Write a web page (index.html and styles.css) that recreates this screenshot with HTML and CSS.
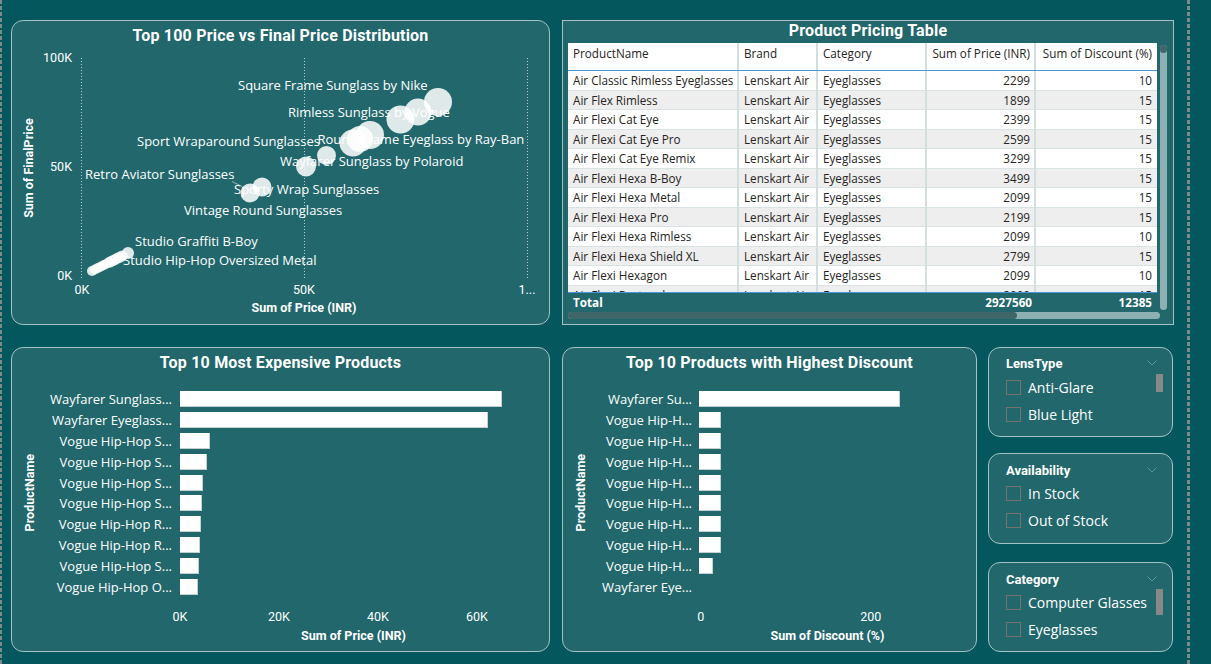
FILE: index.html
```html
<!DOCTYPE html>
<html lang="en">
<head>
<meta charset="utf-8">
<title>Eyewear Pricing Dashboard</title>
<link rel="stylesheet" href="styles.css">
</head>
<body>
<div class="page">
  <div class="edge edge-left"></div>
  <main class="canvas">
    <div class="row">
      <section class="card scatter-card">
        <h2 class="card-title">Top 100 Price vs Final Price Distribution</h2>
        <svg class="scatter-svg" width="537" height="274" viewBox="12 50 537 274">
          <g class="gridlines">
            <line x1="81.5" y1="58" x2="81.5" y2="278"/>
            <line x1="304.5" y1="58" x2="304.5" y2="278"/>
            <line x1="527.5" y1="58" x2="527.5" y2="278"/>
          </g>
          <text class="tick" x="72" y="62.4" text-anchor="end">100K</text>
          <text class="tick" x="72" y="171.4" text-anchor="end">50K</text>
          <text class="tick" x="72" y="280" text-anchor="end">0K</text>
          <text class="tick" x="82" y="294" text-anchor="middle">0K</text>
          <text class="tick" x="304" y="294" text-anchor="middle">50K</text>
          <text class="tick" x="527" y="294" text-anchor="middle">1...</text>
          <text class="axis-title" transform="translate(33.4,168) rotate(-90)" text-anchor="middle">Sum of FinalPrice</text>
          <text class="axis-title" x="304" y="312.4" text-anchor="middle">Sum of Price (INR)</text>
          <line class="leader" x1="232" y1="181.5" x2="242" y2="186.5"/>
          <g class="bubbles">
            <circle cx="438" cy="102" r="14"/>
            <circle cx="418" cy="112" r="13.5"/>
            <circle cx="400.5" cy="119.5" r="14"/>
            <circle cx="370" cy="135" r="14"/>
            <circle cx="360" cy="139" r="13"/>
            <circle cx="353" cy="143" r="13.5"/>
            <circle cx="326.5" cy="155.5" r="9.5"/>
            <circle cx="306" cy="166.5" r="10"/>
            <circle cx="262" cy="187" r="9.5"/>
            <circle cx="250" cy="193" r="9.5"/>
            <circle cx="92" cy="271" r="5"/>
            <circle cx="95" cy="269.5" r="5"/>
            <circle cx="98" cy="268" r="5"/>
            <circle cx="101" cy="266.5" r="5"/>
            <circle cx="104" cy="265" r="5"/>
            <circle cx="107" cy="263.5" r="5"/>
            <circle cx="110" cy="262" r="5.5"/>
            <circle cx="113" cy="260.5" r="5.5"/>
            <circle cx="116" cy="259" r="5.5"/>
            <circle cx="119" cy="257.5" r="5.5"/>
            <circle cx="122" cy="256" r="5.5"/>
            <circle cx="128" cy="253" r="6"/>
          </g>
          <g class="pt-label">
            <text x="238" y="89.6">Square Frame Sunglass by Nike</text>
            <text x="288" y="117.3">Rimless Sunglass by Vogue</text>
            <text x="137" y="146.3">Sport Wraparound Sunglasses</text>
            <text x="317.5" y="143.9">Round Frame Eyeglass by Ray-Ban</text>
            <text x="280" y="166.3">Wayfarer Sunglass by Polaroid</text>
            <text x="85" y="178.9">Retro Aviator Sunglasses</text>
            <text x="234" y="193.6">Sporty Wrap Sunglasses</text>
            <text x="184" y="214.6">Vintage Round Sunglasses</text>
            <text x="135" y="245.6">Studio Graffiti B-Boy</text>
            <text x="123" y="264.6">Studio Hip-Hop Oversized Metal</text>
          </g>
        </svg>
      </section>

      <section class="table-card">
        <h2 class="table-title">Product Pricing Table</h2>
        <div class="table-wrap">
          <div class="table-main">
            <div class="tbl">
              <div class="tbl-head">
                <div class="th">ProductName</div>
                <div class="th">Brand</div>
                <div class="th">Category</div>
                <div class="th num">Sum of Price (INR)</div>
                <div class="th num">Sum of Discount (%)</div>
              </div>
              <div class="tbl-body">
                <div class="tr"><div class="td">Air Classic Rimless Eyeglasses</div><div class="td">Lenskart Air</div><div class="td">Eyeglasses</div><div class="td num">2299</div><div class="td num">10</div></div>
                <div class="tr"><div class="td">Air Flex Rimless</div><div class="td">Lenskart Air</div><div class="td">Eyeglasses</div><div class="td num">1899</div><div class="td num">15</div></div>
                <div class="tr"><div class="td">Air Flexi Cat Eye</div><div class="td">Lenskart Air</div><div class="td">Eyeglasses</div><div class="td num">2399</div><div class="td num">15</div></div>
                <div class="tr"><div class="td">Air Flexi Cat Eye Pro</div><div class="td">Lenskart Air</div><div class="td">Eyeglasses</div><div class="td num">2599</div><div class="td num">15</div></div>
                <div class="tr"><div class="td">Air Flexi Cat Eye Remix</div><div class="td">Lenskart Air</div><div class="td">Eyeglasses</div><div class="td num">3299</div><div class="td num">15</div></div>
                <div class="tr"><div class="td">Air Flexi Hexa B-Boy</div><div class="td">Lenskart Air</div><div class="td">Eyeglasses</div><div class="td num">3499</div><div class="td num">15</div></div>
                <div class="tr"><div class="td">Air Flexi Hexa Metal</div><div class="td">Lenskart Air</div><div class="td">Eyeglasses</div><div class="td num">2099</div><div class="td num">15</div></div>
                <div class="tr"><div class="td">Air Flexi Hexa Pro</div><div class="td">Lenskart Air</div><div class="td">Eyeglasses</div><div class="td num">2199</div><div class="td num">15</div></div>
                <div class="tr"><div class="td">Air Flexi Hexa Rimless</div><div class="td">Lenskart Air</div><div class="td">Eyeglasses</div><div class="td num">2099</div><div class="td num">10</div></div>
                <div class="tr"><div class="td">Air Flexi Hexa Shield XL</div><div class="td">Lenskart Air</div><div class="td">Eyeglasses</div><div class="td num">2799</div><div class="td num">15</div></div>
                <div class="tr"><div class="td">Air Flexi Hexagon</div><div class="td">Lenskart Air</div><div class="td">Eyeglasses</div><div class="td num">2099</div><div class="td num">10</div></div>
                <div class="tr"><div class="td">Air Flexi Rectangle</div><div class="td">Lenskart Air</div><div class="td">Eyeglasses</div><div class="td num">2099</div><div class="td num">15</div></div>
              </div>
            </div>
            <div class="total">
              <span class="tot-label">Total</span><span></span><span></span><span class="num">2927560</span><span class="num last">12385</span>
            </div>
            <div class="hscroll"><div class="hthumb"></div></div>
          </div>
          <div class="vscroll"><div class="vthumb"></div></div>
        </div>
      </section>
    </div>

    <div class="row">
      <section class="card bar-card price-card">
        <h2 class="card-title">Top 10 Most Expensive Products</h2>
        <div class="bar-plot">
          <div class="y-title"><span>ProductName</span></div>
          <ul class="bar-rows">
            <li class="bar-row"><span class="bar-label">Wayfarer Sunglass...</span><span class="bar" style="width:322px"></span></li>
            <li class="bar-row"><span class="bar-label">Wayfarer Eyeglass...</span><span class="bar" style="width:308px"></span></li>
            <li class="bar-row"><span class="bar-label">Vogue Hip-Hop S...</span><span class="bar" style="width:30px"></span></li>
            <li class="bar-row"><span class="bar-label">Vogue Hip-Hop S...</span><span class="bar" style="width:27px"></span></li>
            <li class="bar-row"><span class="bar-label">Vogue Hip-Hop S...</span><span class="bar" style="width:23px"></span></li>
            <li class="bar-row"><span class="bar-label">Vogue Hip-Hop S...</span><span class="bar" style="width:22px"></span></li>
            <li class="bar-row"><span class="bar-label">Vogue Hip-Hop R...</span><span class="bar" style="width:21px"></span></li>
            <li class="bar-row"><span class="bar-label">Vogue Hip-Hop R...</span><span class="bar" style="width:20px"></span></li>
            <li class="bar-row"><span class="bar-label">Vogue Hip-Hop S...</span><span class="bar" style="width:19px"></span></li>
            <li class="bar-row"><span class="bar-label">Vogue Hip-Hop O...</span><span class="bar" style="width:18px"></span></li>
          </ul>
        </div>
        <div class="x-ticks"><span>0K</span><span>20K</span><span>40K</span><span>60K</span></div>
        <div class="x-title">Sum of Price (INR)</div>
      </section>

      <section class="card bar-card disc-card">
        <h2 class="card-title">Top 10 Products with Highest Discount</h2>
        <div class="bar-plot">
          <div class="y-title"><span>ProductName</span></div>
          <ul class="bar-rows">
            <li class="bar-row"><span class="bar-label">Wayfarer Su...</span><span class="bar" style="width:201px"></span></li>
            <li class="bar-row"><span class="bar-label">Vogue Hip-H...</span><span class="bar" style="width:22px"></span></li>
            <li class="bar-row"><span class="bar-label">Vogue Hip-H...</span><span class="bar" style="width:22px"></span></li>
            <li class="bar-row"><span class="bar-label">Vogue Hip-H...</span><span class="bar" style="width:22px"></span></li>
            <li class="bar-row"><span class="bar-label">Vogue Hip-H...</span><span class="bar" style="width:22px"></span></li>
            <li class="bar-row"><span class="bar-label">Vogue Hip-H...</span><span class="bar" style="width:22px"></span></li>
            <li class="bar-row"><span class="bar-label">Vogue Hip-H...</span><span class="bar" style="width:22px"></span></li>
            <li class="bar-row"><span class="bar-label">Vogue Hip-H...</span><span class="bar" style="width:22px"></span></li>
            <li class="bar-row"><span class="bar-label">Vogue Hip-H...</span><span class="bar" style="width:13.5px"></span></li>
            <li class="bar-row"><span class="bar-label">Wayfarer Eye...</span></li>
          </ul>
        </div>
        <div class="x-ticks"><span>0</span><span>200</span></div>
        <div class="x-title">Sum of Discount (%)</div>
      </section>

      <div class="slicers">
        <section class="slicer">
          <header class="slicer-head"><h3>LensType</h3><svg class="chev" width="10" height="6" viewBox="0 0 10 6"><path d="M0.5 0.5 L5 5 L9.5 0.5"/></svg></header>
          <div class="slicer-body">
            <ul class="slicer-list">
              <li><span class="cb"></span>Anti-Glare</li>
              <li><span class="cb"></span>Blue Light</li>
            </ul>
            <div class="slicer-scroll"><div class="sthumb"></div></div>
          </div>
        </section>
        <section class="slicer slicer-mid">
          <header class="slicer-head"><h3>Availability</h3><svg class="chev" width="10" height="6" viewBox="0 0 10 6"><path d="M0.5 0.5 L5 5 L9.5 0.5"/></svg></header>
          <div class="slicer-body">
            <ul class="slicer-list">
              <li><span class="cb"></span>In Stock</li>
              <li><span class="cb"></span>Out of Stock</li>
            </ul>
          </div>
        </section>
        <section class="slicer slicer-last">
          <header class="slicer-head"><h3>Category</h3><svg class="chev" width="10" height="6" viewBox="0 0 10 6"><path d="M0.5 0.5 L5 5 L9.5 0.5"/></svg></header>
          <div class="slicer-body">
            <ul class="slicer-list">
              <li><span class="cb"></span>Computer Glasses</li>
              <li><span class="cb"></span>Eyeglasses</li>
            </ul>
            <div class="slicer-scroll"><div class="sthumb tall"></div></div>
          </div>
        </section>
      </div>
    </div>
  </main>
  <div class="edge edge-right"></div>
</div>
</body>
</html>
```

FILE: styles.css
```css
* { box-sizing: border-box; margin: 0; padding: 0; }
html, body { width: 1211px; height: 664px; }
body {
  background: #04585d;
  font-family: "Open Sans", "Noto Sans", sans-serif;
  color: #fff;
  overflow: hidden;
}
.page { display: flex; width: 1211px; height: 664px; }
.edge {
  background: repeating-linear-gradient(to bottom, #7c8a8a 0 4px, transparent 4px 6px);
  height: 664px;
}
.edge-left { width: 2px; }
.edge-right { width: 3px; }
.canvas {
  width: 1185px;
  padding: 20px 0 0 9px;
  display: flex;
  flex-direction: column;
  gap: 22px;
}
.row { display: flex; gap: 12px; height: 305px; }

.card {
  background: #21676c;
  border: 1px solid #a3c2c4;
  border-radius: 12px;
}
.card-title {
  height: 29px;
  font: 700 16px/29px Roboto, "Liberation Sans", sans-serif;
  letter-spacing: 0.2px;
  text-align: center;
  color: #fff;
}

/* scatter */
.scatter-card { width: 539px; display: flex; flex-direction: column; }
.scatter-svg { display: block; }
.gridlines line { stroke: #b3cbcc; stroke-width: 1; stroke-dasharray: 1 2; }
.tick { font: 400 12.5px Roboto, sans-serif; fill: #fff; }
.axis-title { font: 700 12.5px Roboto, sans-serif; fill: #fff; }
.bubbles circle { fill: #fff; fill-opacity: 0.86; }
.pt-label text { font: 400 13px "Open Sans", sans-serif; fill: #fff; }
.leader { stroke: #9db5b6; stroke-width: 1; }

/* table */
.table-card {
  width: 612px;
  background: #21676c;
  border: 1px solid #a3c2c4;
}
.table-title {
  height: 22px;
  font: 700 16px/19px Roboto, sans-serif;
  letter-spacing: 0.2px;
  text-align: center;
  color: #fff;
}
.table-wrap { display: flex; padding-left: 5px; }
.table-main { width: 592px; }
.tbl {
  width: 589px;
  height: 250px;
  overflow: hidden;
  background: #fff;
  border-bottom: 1px solid #4c96d7;
}
.tbl-head, .tr, .total {
  display: grid;
  grid-template-columns: 171px 79px 109px 109px 121px;
}
.tbl-head { height: 28px; border-bottom: 1px solid #4c96d7; }
.th {
  padding: 3px 5px 0;
  font-size: 11.7px;
  line-height: 15px;
  color: #252423;
  border-right: 2px solid #d3dfdf;
  white-space: nowrap;
}
.th.num { text-align: right; padding-right: 4px; }
.tr { height: 19.5px; }
.tr:nth-child(even) { background: #eeeeee; }
.td {
  padding: 0 5px;
  font-size: 11.7px;
  line-height: 19.5px;
  color: #252423;
  border-right: 2px solid #d3dfdf;
  box-shadow: inset 0 -1px 0 #d9e3e3;
  white-space: nowrap;
  overflow: hidden;
}
.td.num { text-align: right; padding-right: 4px; }
.th:last-child, .td:last-child { border-right: 0; padding-right: 5px; }
.total {
  height: 18px;
  font-size: 11.7px;
  font-weight: 700;
  line-height: 18px;
  color: #fff;
}
.total .tot-label { padding-left: 5px; }
.total .num { text-align: right; padding-right: 4px; }
.total .num.last { padding-right: 5px; }
.hscroll {
  margin-top: 1px;
  width: 592px;
  height: 7px;
  background: #8db1b3;
  border-radius: 4px;
}
.hthumb { width: 449px; height: 7px; background: #3f6669; border-radius: 4px; }
.vscroll {
  margin-top: 2px;
  width: 7px;
  height: 265px;
  background: #8db1b3;
  border-radius: 4px;
}
.vthumb { height: 8px; background: #3f6669; border-radius: 4px; }

/* bar charts */
.bar-card { display: flex; flex-direction: column; }
.price-card { width: 539px; }
.disc-card { width: 415px; }
.bar-plot { display: flex; margin-top: 11.5px; height: 209px; }
.y-title {
  width: 34px;
  display: flex;
  align-items: center;
  justify-content: center;
  font: 700 12.5px Roboto, sans-serif;
}
.y-title span { writing-mode: vertical-rl; transform: rotate(180deg); }
.bar-rows { list-style: none; display: flex; flex-direction: column; }
.bar-row { display: flex; align-items: center; height: 20.9px; gap: 8px; }
.disc-card .bar-row { gap: 7px; }
.bar-label {
  width: 126px;
  text-align: right;
  font-size: 13px;
  line-height: 16px;
  white-space: nowrap;
}
.disc-card .bar-label { width: 95px; }
.bar { height: 16px; background: #fff; box-shadow: inset -1px -1px 0 #c5d0d1; }
.x-ticks { display: flex; margin-top: 12.5px; font: 400 12.5px/14px Roboto, sans-serif; }
.x-ticks span { text-align: center; width: 99px; }
.price-card .x-ticks { margin-left: 118.5px; }
.disc-card .x-ticks { margin-left: 52.7px; }
.disc-card .x-ticks span { width: 170px; }
.x-title { margin-top: 5px; font: 700 12.5px/14px Roboto, sans-serif; text-align: center; }
.price-card .x-title { margin-left: 168px; width: 347px; }
.disc-card .x-title { margin-left: 137px; width: 255px; }

/* slicers */
.slicers {
  width: 185px;
  margin-left: -1px;
  display: flex;
  flex-direction: column;
}
.slicer {
  height: 90px;
  background: #21676c;
  border: 1px solid #a3c2c4;
  border-radius: 12px;
  padding: 8px 9px 0 17px;
}
.slicer-mid { height: 91px; margin-top: 16px; padding-top: 9px; }
.slicer-mid .slicer-body { margin-top: 1px; }
.slicer-last { margin-top: 18px; padding-top: 9px; }
.slicer-last .slicer-body { margin-top: 1px; }
.slicer-head { display: flex; align-items: center; justify-content: space-between; height: 16px; }
.slicer-head h3 { font: 700 13px/16px Roboto, sans-serif; color: #fff; }
.chev { margin-right: 6px; margin-top: -2px; }
.chev path { fill: none; stroke: #5f9194; stroke-width: 1; }
.slicer-body { display: flex; margin-top: 2px; }
.slicer-list { list-style: none; flex: 1; }
.slicer-list li {
  display: flex;
  align-items: center;
  height: 27px;
  font-size: 14px;
  color: #fff;
  white-space: nowrap;
}
.cb {
  width: 15px;
  height: 15px;
  border: 1px solid #78726f;
  margin-right: 7px;
  flex: none;
}
.slicer-scroll { width: 7px; }
.sthumb { height: 18px; background: #888888; }
.sthumb.tall { height: 26px; }
```
